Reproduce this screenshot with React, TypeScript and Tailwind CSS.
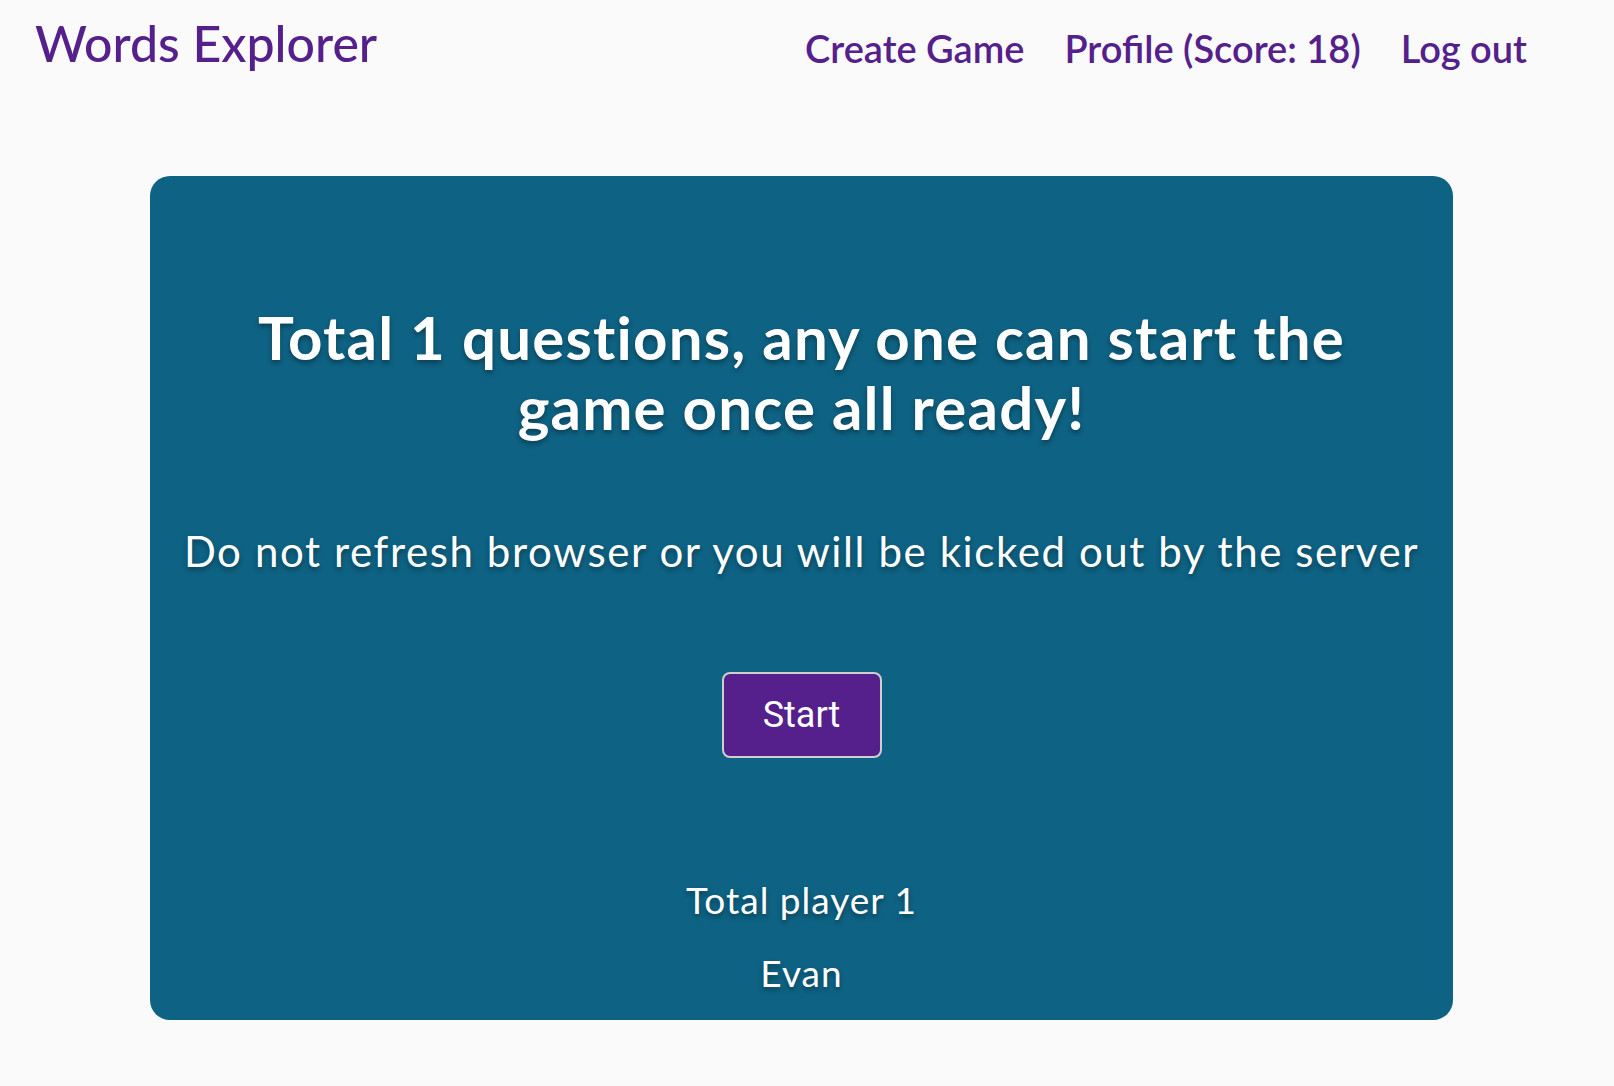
import React from 'react';

const players = ['Evan'];

const Header = () => (
  <header className="flex items-start justify-between pl-[35px] pr-[87px] text-[#55208b]">
    <h1 className="pt-[18px] text-[50px] leading-none font-medium">Words Explorer</h1>
    <nav className="flex gap-[40px] pt-[29px] text-[38px] leading-none font-semibold">
      <a href="#">Create Game</a>
      <a href="#">Profile (Score: 18)</a>
      <a href="#">Log out</a>
    </nav>
  </header>
);

export default function App() {
  return (
    <div className="min-h-[1086px] bg-[#fafafa] font-['Lato',sans-serif]">
      <Header />
      <main className="ml-[150px] mt-[108px] w-[1303px] rounded-[20px] bg-[#0e6283] pb-[26px] pt-[126px] text-white">
        <div className="flex flex-col items-center text-center [text-shadow:0_3px_5px_rgba(0,0,0,0.35)]">
          <h2 className="w-[1160px] text-[60px] leading-[70px] font-bold tracking-[1.2px]">
            Total 1 questions, any one can start the game once all ready!
          </h2>
          <p className="mt-[85px] text-[42px] leading-[48px] font-normal tracking-[1.6px]">
            Do not refresh browser or you will be kicked out by the server
          </p>
          <button className="mt-[97px] h-[86px] w-[160px] rounded-[8px] border-2 border-[#cfcfcf] bg-[#55208b] font-['Roboto',sans-serif] text-[36px] text-white [text-shadow:none]">
            Start
          </button>
          <div className="mt-[121px] flex flex-col gap-[31px] text-[37px] leading-[42px] tracking-[1px]">
            <p>Total player {players.length}</p>
            {players.map((p) => (
              <p key={p}>{p}</p>
            ))}
          </div>
        </div>
      </main>
    </div>
  );
}
